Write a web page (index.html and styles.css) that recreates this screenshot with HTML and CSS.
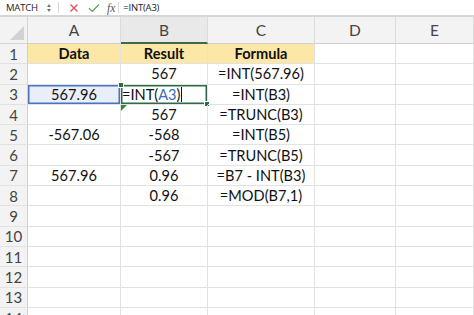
FILE: index.html
```html
<!DOCTYPE html>
<html lang="en">
<head>
    <meta charset="UTF-8">
    <title>INT formula</title>

    <link rel="stylesheet" href="styles.css">
</head>
<body>
    <div class="formula-bar">
        <div class="name-box">MATCH</div>
        <div class="spinner">
            <span class="arrow up"></span>
            <span class="arrow down"></span>
        </div>
        <div class="divider"></div>
        <svg class="icon cancel" width="10" height="10" viewBox="0 0 10 10">
            <path d="M1.5 1.5 L8.5 8.5 M8.5 1.5 L1.5 8.5" stroke="#d9534f" stroke-width="1.3" fill="none"/>
        </svg>
        <svg class="icon enter" width="12" height="10" viewBox="0 0 12 10">
            <path d="M1 5.2 L4.3 8.4 L11 1.5" stroke="#5aa55a" stroke-width="1.3" fill="none"/>
        </svg>
        <div class="fx">fx</div>
        <div class="divider short"></div>
        <div class="formula-text">=INT(A3)</div>
    </div>

    <div class="sheet">
        <div class="corner"></div>
        <div class="col-head">A</div>
        <div class="col-head active">B</div>
        <div class="col-head">C</div>
        <div class="col-head">D</div>
        <div class="col-head">E</div>

        <div class="row-head">1</div>
        <div class="cell title">Data</div>
        <div class="cell title">Result</div>
        <div class="cell title">Formula</div>
        <div class="cell"></div>
        <div class="cell"></div>

        <div class="row-head">2</div>
        <div class="cell"></div>
        <div class="cell">567</div>
        <div class="cell">=INT(567.96)</div>
        <div class="cell"></div>
        <div class="cell"></div>

        <div class="row-head">3</div>
        <div class="cell ref">567.96</div>
        <div class="cell editing">=INT(<span class="ref-text">A3</span>)<span class="caret"></span></div>
        <div class="cell">=INT(B3)</div>
        <div class="cell"></div>
        <div class="cell"></div>

        <div class="row-head">4</div>
        <div class="cell"></div>
        <div class="cell flagged">567</div>
        <div class="cell">=TRUNC(B3)</div>
        <div class="cell"></div>
        <div class="cell"></div>

        <div class="row-head">5</div>
        <div class="cell">-567.06</div>
        <div class="cell">-568</div>
        <div class="cell">=INT(B5)</div>
        <div class="cell"></div>
        <div class="cell"></div>

        <div class="row-head">6</div>
        <div class="cell"></div>
        <div class="cell">-567</div>
        <div class="cell">=TRUNC(B5)</div>
        <div class="cell"></div>
        <div class="cell"></div>

        <div class="row-head">7</div>
        <div class="cell">567.96</div>
        <div class="cell">0.96</div>
        <div class="cell">=B7 - INT(B3)</div>
        <div class="cell"></div>
        <div class="cell"></div>

        <div class="row-head">8</div>
        <div class="cell"></div>
        <div class="cell">0.96</div>
        <div class="cell">=MOD(B7,1)</div>
        <div class="cell"></div>
        <div class="cell"></div>

        <div class="row-head">9</div>
        <div class="cell"></div>
        <div class="cell"></div>
        <div class="cell"></div>
        <div class="cell"></div>
        <div class="cell"></div>

        <div class="row-head">10</div>
        <div class="cell"></div>
        <div class="cell"></div>
        <div class="cell"></div>
        <div class="cell"></div>
        <div class="cell"></div>

        <div class="row-head">11</div>
        <div class="cell"></div>
        <div class="cell"></div>
        <div class="cell"></div>
        <div class="cell"></div>
        <div class="cell"></div>

        <div class="row-head">12</div>
        <div class="cell"></div>
        <div class="cell"></div>
        <div class="cell"></div>
        <div class="cell"></div>
        <div class="cell"></div>

        <div class="row-head">13</div>
        <div class="cell"></div>
        <div class="cell"></div>
        <div class="cell"></div>
        <div class="cell"></div>
        <div class="cell"></div>

        <div class="row-head">14</div>
        <div class="cell"></div>
        <div class="cell"></div>
        <div class="cell"></div>
        <div class="cell"></div>
        <div class="cell"></div>
    </div>
</body>
</html>
```

FILE: styles.css
```css
body {
    margin: 0;
    width: 474px;
    height: 315px;
    overflow: hidden;
    background: #ffffff;
    font-family: Lato, "Open Sans", sans-serif;
}

.formula-bar {
    display: flex;
    align-items: center;
    height: 15px;
    padding-left: 6px;
    background: #ffffff;
    border-bottom: 2px solid #d6d6d6;
    font-family: "Open Sans", sans-serif;
    font-size: 9.5px;
    color: #222222;
}

.name-box {
    width: 40px;
    letter-spacing: -0.2px;
}

.spinner {
    display: flex;
    flex-direction: column;
    gap: 2px;
    width: 9px;
    padding-left: 1px;
}

.arrow {
    width: 0;
    height: 0;
    border-left: 2.5px solid transparent;
    border-right: 2.5px solid transparent;
}

.arrow.up {
    border-bottom: 3px solid #777777;
}

.arrow.down {
    border-top: 3px solid #777777;
}

.divider {
    width: 1px;
    height: 11px;
    background: #d8d8d8;
    margin: 0 6px 0 2px;
}

.divider.short {
    margin: 0 4px 0 3px;
}

.icon.cancel {
    margin: 0 6px 0 4px;
}

.icon.enter {
    margin: 0 7px 0 3px;
}

.fx {
    font-family: "Liberation Serif", serif;
    font-style: italic;
    font-size: 11.5px;
    color: #555555;
}

.formula-text {
    letter-spacing: -0.2px;
}

.sheet {
    display: grid;
    grid-template-columns: 28px 93px 87px 107px 81px 78px;
    grid-template-rows: 27px;
    grid-auto-rows: 20.3px;
    font-size: 14.6px;
    color: #111111;
}

.corner {
    position: relative;
    background: #f3f3f3;
    border-right: 1px solid #d4d4d4;
    border-bottom: 1px solid #d4d4d4;
}

.corner::after {
    content: "";
    position: absolute;
    right: 3px;
    bottom: 3px;
    width: 0;
    height: 0;
    border-left: 14px solid transparent;
    border-bottom: 14px solid #d2d2d2;
}

.col-head {
    display: flex;
    align-items: center;
    justify-content: center;
    background: #f3f3f3;
    border-right: 1px solid #dcdcdc;
    border-bottom: 1px solid #d0d0d0;
    font-size: 15.5px;
    color: #444444;
}

.col-head.active {
    background: #e9e9e9;
    border-bottom: 2px solid #3b6b4c;
}

.row-head {
    display: flex;
    align-items: center;
    justify-content: center;
    background: #f3f3f3;
    border-right: 1px solid #d0d0d0;
    border-bottom: 1px solid #e2e2e2;
    font-size: 15px;
    color: #444444;
}

.cell {
    position: relative;
    display: flex;
    align-items: center;
    justify-content: center;
    border-right: 1px solid #e2e2e2;
    border-bottom: 1px solid #e2e2e2;
    white-space: nowrap;
}

.cell.title {
    background: #fde7a6;
    font-weight: bold;
}

.cell.ref {
    background: #e9eef8;
    box-shadow: inset 0 0 0 1.5px #4a72c4;
}

.cell.editing {
    justify-content: flex-start;
    padding-left: 1px;
    box-shadow: inset 0 0 0 1.5px #2e6a45;
    overflow: visible;
}

.cell.editing::before,
.cell.editing::after {
    content: "";
    position: absolute;
    width: 4px;
    height: 4px;
    background: #2e6a45;
    border: 1px solid #ffffff;
}

.cell.editing::before {
    left: -3px;
    top: -3px;
}

.cell.editing::after {
    right: -3px;
    bottom: -3px;
}

.ref-text {
    color: #3d6bc0;
}

.caret {
    width: 1px;
    height: 15px;
    margin-left: 1px;
    background: #111111;
}

.cell.flagged::before {
    content: "";
    position: absolute;
    left: 0;
    top: 0;
    width: 0;
    height: 0;
    border-top: 6px solid #2f8a3c;
    border-right: 6px solid transparent;
}
```
